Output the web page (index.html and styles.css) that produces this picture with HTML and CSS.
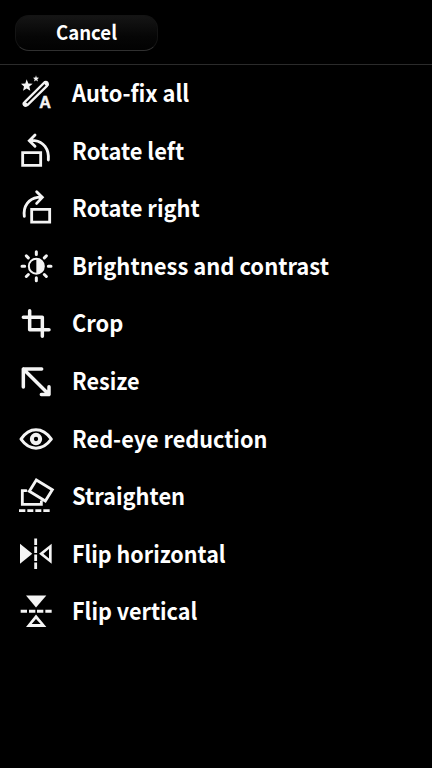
FILE: index.html
```html
<!DOCTYPE html>
<html lang="en">
<head>
<meta charset="utf-8">
<title>Edit</title>
<link rel="stylesheet" href="styles.css">
</head>
<body>
<header class="toolbar"><button class="cancel"><span class="caption">Cancel</span></button></header>
<ul class="menu">
<li class="item"><svg class="icon" viewBox="0 -0.5 180 172.65"><path class="solid" d="M50 42l5 13 13 1-10 8 3 13-11-7-11 7 3-13-9-8 13-1zM78 30l2 7 7 1-5 4 2 7-6-4-6 4 2-7-5-4 7-1z"/><path class="thin" d="M44 111L104 51Q111 48 113 55Q115 59 111 62L53 119Q47 124 42 119Q39 115 44 111Z"/><path class="solid" d="M40 114q7-7 14 4-5 7-12 4-4-3-2-8zM101 52q9-6 14 1 3 6-3 12-8-4-11-13z"/><text class="letter" x="88" y="129" textLength="35" lengthAdjust="spacingAndGlyphs">A</text></svg><span class="label">Auto-fix all</span></li>
<li class="item"><svg class="icon" viewBox="0 1.1 180 172.65"><path class="line" d="M38 90H92V128H38ZM75 37L58 54 75 71M59 54H74C99 57 118 78 115 112"/></svg><span class="label left">Rotate left</span></li>
<li class="item"><svg class="icon" viewBox="0 -0.2 180 172.65"><path class="line" d="M65 88H119V126H65ZM80 35L97 52 80 70M96 52H83C57 56 39 77 43 109"/></svg><span class="label right">Rotate right</span></li>
<li class="item"><svg class="icon" viewBox="0 4.4 180 172.65"><circle class="ring" cx="79" cy="89" r="22.5"/><path class="solid" d="M79 67a22 22 0 0 1 0 44z"/><path class="ray" d="M79 46V54M79 124V133M36 89H44M115 89H123M49 58L55 64M109 58L103 64M49 120L55 114M109 120L103 114"/></svg><span class="label bright">Brightness and contrast</span></li>
<li class="item"><svg class="icon" viewBox="0 3.1 180 172.65"><path class="thick" d="M59 50V107H117M40 70H97V127"/></svg><span class="label crop">Crop</span></li>
<li class="item"><svg class="icon" viewBox="0 4.7 180 172.65"><path class="thick" d="M40 107V53H95M40 53L117 129M117 106V129H94"/></svg><span class="label resize">Resize</span></li>
<li class="item"><svg class="icon" viewBox="0 3.4 180 172.65"><path class="eye" d="M33 91Q52 63 78 63T124 91Q104 118 78 118T33 91Z"/><circle class="iris" cx="78" cy="90.5" r="12.5"/></svg><span class="label redeye">Red-eye reduction</span></li>
<li class="item"><svg class="icon" viewBox="0 5 180 172.65"><path class="line" d="M79 41L127 70 106 104 58 75ZM48 73H37V114H94V106"/><path class="dash" d="M27 133H46M52 133H70M76 133H94M100 133H119"/></svg><span class="label straighten">Straighten</span></li>
<li class="item"><svg class="icon" viewBox="0 3.7 180 172.65"><path class="solid" d="M30 60L67 90 30 120Z"/><path class="dash" d="M77 44V64M77 68V88M77 92V112M77 116V136"/><path class="solid" fill-rule="evenodd" d="M125 60V120L87 90ZM117 76L100 90 117 104Z"/></svg><span class="label fliph">Flip horizontal</span></li>
<li class="item"><svg class="icon" viewBox="0 5.3 180 172.65"><path class="solid" d="M48 43H109L78 79Z"/><path class="dash" d="M32 90H51M57 90H76M81 90H100M106 90H125"/><path class="solid" fill-rule="evenodd" d="M78 100L109 137H48ZM78 113L65 128H92Z"/></svg><span class="label flipv">Flip vertical</span></li>
</ul>
</body>
</html>
```
FILE: styles.css
```css
* { box-sizing: border-box; }
body {
  margin: 0;
  height: 768px;
  overflow: hidden;
  background: #000;
  color: #fff;
  font-family: "Noto Sans CJK SC", "Noto Sans", sans-serif;
}
.toolbar {
  height: 65px;
  padding: 15px 15px 0;
  border-bottom: 1px solid #2b2b2b;
}
.cancel {
  display: block;
  width: 143px;
  height: 36px;
  padding: 0 0 2px;
  border: 1px solid #141414;
  border-bottom-color: #303030;
  border-radius: 14px;
  background: linear-gradient(#151515, #060606 60%, #020202);
  color: #fff;
  font: bold 20px/32px "Noto Sans CJK SC", sans-serif;
}
.caption {
  display: block;
  transform: translateY(-0.5px) scaleX(0.93);
}
.menu {
  margin: 0;
  padding: 0 0 0 10px;
  list-style: none;
}
.item {
  display: flex;
  align-items: center;
  height: 57.55px;
}
.icon {
  flex: none;
  width: 60px;
  height: 57.55px;
}
.label {
  margin-left: 2px;
  padding-bottom: 3px;
  font-size: 23.5px;
  font-weight: bold;
  line-height: 34px;
  white-space: nowrap;
  transform: scaleX(0.93);
  transform-origin: left;
}
.bright { transform: scaleX(0.935); }
.redeye { transform: scaleX(0.923); }
.resize { transform: scaleX(0.92); }
.fliph { transform: scaleX(0.914); }
.flipv { transform: scaleX(0.918); }
.icon path, .icon circle { fill: none; stroke: #f4f4f4; }
.icon .solid { fill: #f4f4f4; stroke: none; }
.line { stroke-width: 8.5; stroke-linecap: round; }
.thin { stroke-width: 7; }
.ring { stroke-width: 6; }
.ray { stroke-width: 9; stroke-linecap: round; }
.thick { stroke-width: 10.5; stroke-linecap: round; stroke-linejoin: round; }
.eye { stroke-width: 9; stroke-linejoin: round; }
.iris { stroke-width: 12; }
.dash { stroke-width: 8.5; }
.letter { fill: #f4f4f4; stroke: #f4f4f4; stroke-width: 1.5; font: bold 52px "Liberation Sans", sans-serif; }
```
